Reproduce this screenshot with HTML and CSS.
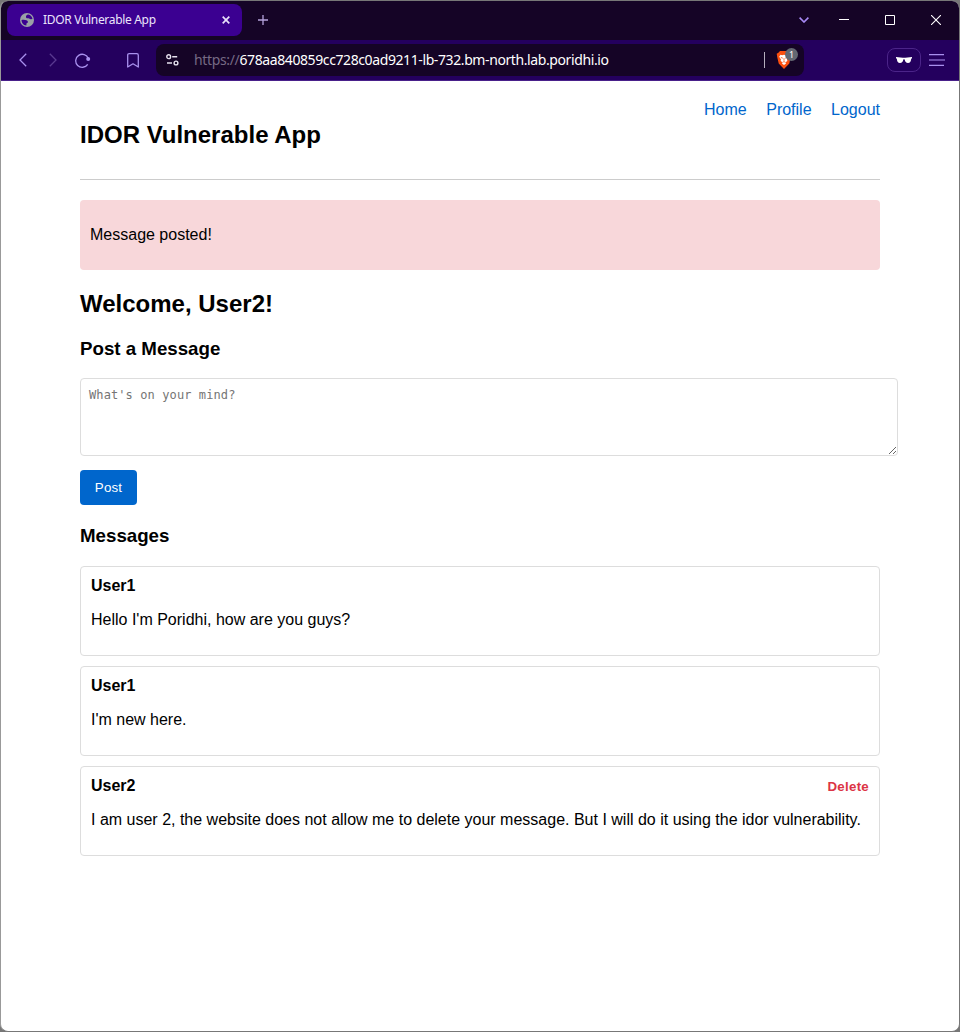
FILE: index.html
```
<!DOCTYPE html>
<html lang="en">
<head>
<meta charset="utf-8">
<title>IDOR Vulnerable App</title>
<link rel="stylesheet" href="styles.css">
</head>
<body>
<div class="window">
  <div class="tabstrip">
    <div class="tab">
      <svg class="globe" width="14" height="14" viewBox="0 0 14 14"><circle cx="7" cy="7" r="7" fill="#9aa0a6"/><path d="M8.300 1.500C6.500 1.600 5.800 3 6 4.300c.3 1.200 1.500.9 2.500 1 .9.100 1.300 1 2.300.9l1.700-.3C12 3.500 10.500 1.900 8.300 1.500z" fill="#3b0091"/><path d="M1.500 7c1.800-.4 3.700-.3 5 .3 1.200.5 1.600 1.200 1.400 2-.3.900-1.300.7-1.500 1.600-.1.600.1 1 0 1.600C3.500 12.300 1.600 9.800 1.500 7z" fill="#3b0091"/></svg>
      <span class="tab-title">IDOR Vulnerable App</span>
      <svg class="tab-close" width="8" height="8" viewBox="0 0 8 8"><path d="M.7.7l6.6 6.6M7.3.7L.7 7.3" stroke="#e8e0fa" stroke-width="1.7"/></svg>
    </div>
    <svg class="new-tab" width="10" height="10" viewBox="0 0 10 10"><path d="M5 0v10M0 5h10" stroke="#b5a3dc" stroke-width="1.3"/></svg>
    <div class="controls">
      <svg class="chevron" width="10" height="6" viewBox="0 0 10 6"><path d="M.6.6L5 5 9.4.6" fill="none" stroke="#a78af5" stroke-width="1.6"/></svg>
      <svg width="10" height="10" viewBox="0 0 10 10"><path d="M0 4.5h10" stroke="#fff"/></svg>
      <svg width="10" height="10" viewBox="0 0 10 10"><path d="M.5.5h9v9h-9z" fill="none" stroke="#fff"/></svg>
      <svg width="10" height="10" viewBox="0 0 10 10"><path d="M0 0l10 10M10 0L0 10" stroke="#fff" stroke-width="1.1"/></svg>
    </div>
  </div>
  <div class="toolbar">
    <div class="nav-icons">
      <svg width="8" height="14" viewBox="0 0 8 14"><path d="M7.2.8L1 7l6.2 6.2" fill="none" stroke="#a990ee" stroke-width="1.3"/></svg>
      <svg width="8" height="14" viewBox="0 0 8 14"><path d="M.8.8L7 7 .8 13.200" fill="none" stroke="#593990" stroke-width="1.3"/></svg>
      <svg width="16" height="15" viewBox="0 0 16 15"><path d="M13.300 5.500A6.500 6.500 0 1 0 12.700 11.300" fill="none" stroke="#a990ee" stroke-width="1.3"/><circle cx="13.200" cy="6" r="2" fill="#a990ee"/></svg>
      <svg width="12" height="15" viewBox="0 0 12 15"><path d="M.7 14V2.200Q.7.700 2.200.7h7.600Q11.300.700 11.300 2.200V14L6 10.800z" fill="none" stroke="#a990ee" stroke-width="1.3" stroke-linejoin="round"/></svg>
    </div>
    <div class="address">
      <svg class="tune" width="13" height="12" viewBox="0 0 13 12"><g fill="none" stroke="#e6e2ee" stroke-width="1.4"><circle cx="2.700" cy="2.700" r="1.900"/><path d="M6.200 2.700h5M1 9h5"/><circle cx="10" cy="9" r="1.900"/></g></svg>
      <div class="url"><span class="scheme">https://</span><span class="host">678aa840859cc728c0ad9211-lb-732.bm-north.lab.poridhi.io</span></div>
      <span class="divider"></span>
      <div class="shield">
        <svg width="16" height="18" viewBox="0 0 16 18"><path d="M4 0h8l1.600 1.800 1.700 1-.6 3.200-1.400 6.500L8 18l-5.300-5.500L1.200 6 .7 2.800l1.700-1z" fill="#fb4f0f"/><path d="M4.500 3.800l1.600.4L8 3.800l1.900.4 1.600-.4 1.300 2-1.800 2.600.4 1.600-1.900 1.200L10 12.600 8 14l-2-1.400.5-1.400L4.600 10 5 8.400 3.200 5.800z" fill="#fff"/><path d="M4.800 6.400l2 .8M11.200 6.400l-2 .8M8 7.200v2.600M6.600 11.300l1.400-.7 1.400.7" fill="none" stroke="#fb4f0f" stroke-width=".8"/></svg>
        <span class="badge">1</span>
      </div>
    </div>
    <div class="private"><svg width="16" height="6" viewBox="0 0 16 6"><path d="M0 0l6.800.700h2.400L16 0v1.200l-.8.5C15 4.500 14 6 12 6 10 6 9 4.800 8.700 2.500Q8 1.800 7.300 2.500C7 4.800 6 6 4 6 2 6 1 4.500.8 1.700L0 1.200z" fill="#fff"/></svg></div>
    <svg class="menu" width="16" height="12" viewBox="0 0 16 12"><path d="M0 .7h15M0 6h16M0 11.300h15" stroke="#a990ee" stroke-width="1.2"/></svg>
  </div>
  <main class="page">
    <header class="site-header">
      <h1>IDOR Vulnerable App</h1>
      <nav><a>Home</a><a>Profile</a><a>Logout</a></nav>
    </header>
    <div class="alert">Message posted!</div>
    <h2>Welcome, User2!</h2>
    <h3 class="post-heading">Post a Message</h3>
    <textarea placeholder="What's on your mind?"></textarea>
    <button class="post">Post</button>
    <h3 class="list-heading">Messages</h3>
    <section class="messages">
      <article class="card"><div class="card-head"><strong>User1</strong></div><p>Hello I'm Poridhi, how are you guys?</p></article>
      <article class="card"><div class="card-head"><strong>User1</strong></div><p>I'm new here.</p></article>
      <article class="card"><div class="card-head"><strong>User2</strong><span class="delete">Delete</span></div><p>I am user 2, the website does not allow me to delete your message. But I will do it using the idor vulnerability.</p></article>
    </section>
  </main>
</div>
</body>
</html>
```
FILE: styles.css
```
* { box-sizing: border-box; }
body { margin: 0; background: #777; font: 16px/18px "Liberation Sans", Arial, sans-serif; color: #000; }
svg { display: block; flex: none; }
.window { height: 1032px; border: 1px solid #777; border-left-color: #999; border-radius: 8px; overflow: hidden; background: #fff; }
.tabstrip { height: 39px; display: flex; align-items: center; padding: 0 18px 0 6px; background: #150426; }
.tab { width: 235px; height: 32px; margin-bottom: 1px; border-radius: 8px; background: #3b0091; display: flex; align-items: center; padding: 0 12px 0 13px; }
.tab-title { flex: 1; margin-left: 9px; color: #ece5fb; font: 12px/16px "Noto Sans", "Open Sans", sans-serif; letter-spacing: -0.32px; white-space: nowrap; }
.new-tab { margin: 0 0 1px 16px; }
.controls { margin: 0 0 1px auto; display: flex; align-items: center; gap: 36px; }
.chevron { margin-right: -6px; }
.toolbar { height: 41px; display: flex; align-items: center; background: #24005e; border-bottom: 1px solid #49208a; }
.nav-icons { display: flex; align-items: center; width: 155px; padding-left: 18px; }
.nav-icons svg:nth-child(2) { margin-left: 22px; }
.nav-icons svg:nth-child(3) { margin-left: 18px; }
.nav-icons svg:nth-child(4) { margin-left: 36px; }
.address { width: 648px; height: 32px; border-radius: 8px; background: #150426; display: flex; align-items: center; padding: 0 12px 0 10px; }
.url { flex: 1; margin-left: 15px; font: 14px/20px "Noto Sans", "Open Sans", sans-serif; letter-spacing: -0.4px; white-space: nowrap; }
.scheme { color: #766a84; letter-spacing: -0.35px; }
.host { color: #fff; }
.divider { width: 1px; height: 16px; background: #b5aebd; margin-right: 11px; }
.shield { position: relative; width: 16px; height: 18px; }
.badge { position: absolute; left: 9px; top: -3px; width: 13px; height: 13px; border-radius: 50%; background: #646872; color: #fff; font: 9px/13px "Noto Sans", sans-serif; text-align: center; }
.private { margin-left: 83px; width: 34px; height: 24px; border: 1px solid #4b2489; border-radius: 8px; display: flex; align-items: center; justify-content: center; }
.menu { margin-left: 8px; }
.page { width: 800px; margin: 0 auto; }
h1, h2, h3, p { margin: 0; font-weight: bold; }
.site-header { height: 99px; display: flex; justify-content: space-between; border-bottom: 1px solid #ccc; }
h1, h2 { font-size: 24px; line-height: 28px; }
h1 { padding-top: 40px; }
nav { display: flex; gap: 19.5px; padding-top: 20px; color: #06c; }
.alert { margin-top: 20px; height: 70px; padding: 26px 10px; border-radius: 4px; background: #f8d7da; }
h2 { margin-top: 20px; }
h3 { font-size: 18.72px; line-height: 22px; }
.post-heading { margin-top: 20px; }
textarea { display: block; width: 818px; height: 78px; margin: 18px 0 14px; padding: 8px; border: 1px solid #ddd; border-radius: 4px; font: 12px/16px "DejaVu Sans Mono", monospace; letter-spacing: 0.1px; background: #fff; }
.post { display: block; width: 57px; height: 35px; padding: 0; border: 0; border-radius: 4px; background: #06c; color: #fff; font: 13.333px "Liberation Sans", Arial, sans-serif; letter-spacing: 0.15px; }
.list-heading { margin-top: 20px; }
.messages { margin-top: 19px; display: grid; gap: 10px; }
.card { height: 90px; border: 1px solid #ddd; border-radius: 4px; padding: 10px; }
.card-head { display: flex; justify-content: space-between; height: 18px; }
.card p { margin-top: 16px; font-weight: normal; white-space: nowrap; }
.delete { padding-top: 1px; color: #dc3545; font-size: 13.333px; font-weight: bold; letter-spacing: 0.25px; }
```
